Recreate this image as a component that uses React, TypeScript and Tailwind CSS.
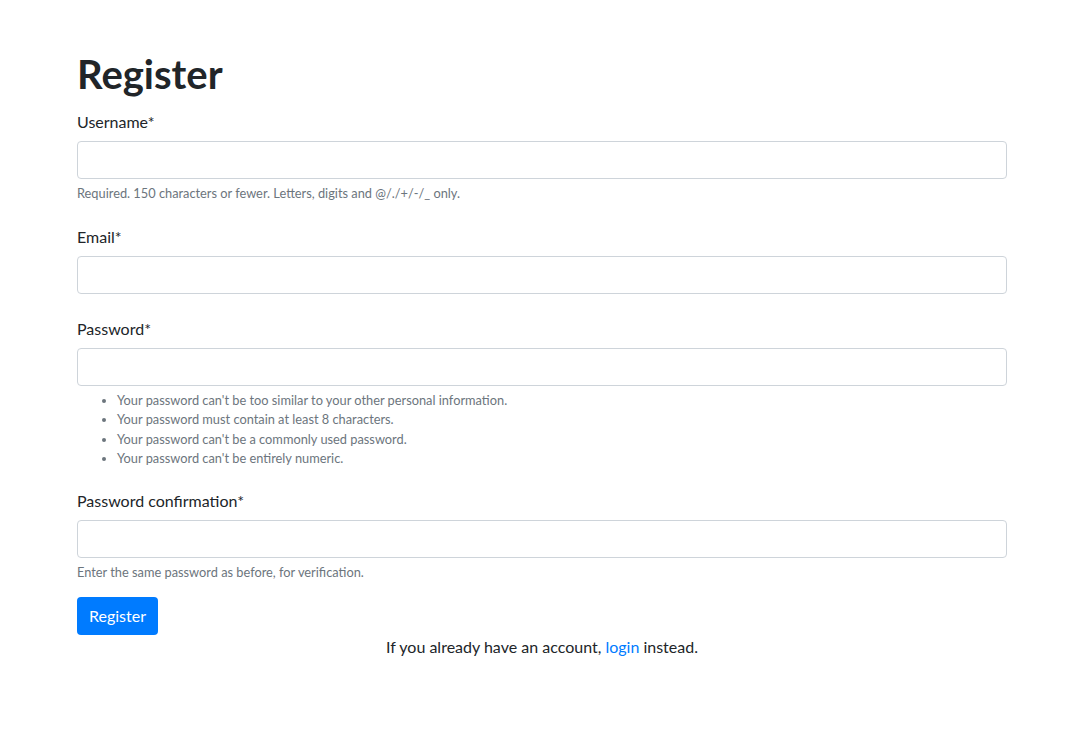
export default function App() {
  const font = { fontFamily: 'Lato, "Noto Sans", sans-serif' };
  return (
    <div className="min-h-[742px] bg-white pt-[50px] text-[#212529]" style={font}>
      <div className="ml-[77px] w-[930px]">
        <h1 className="h-[48px] text-[40px] font-bold leading-[48px]">Register</h1>
        <form>
          <label className="mt-[12px] mb-[7px] block text-base leading-6">Username*</label>
          <input type="text" className="block h-[38px] w-full rounded-[4px] border border-[#ced4da] px-3" />
          <small className="mt-[5px] block text-[12.8px] leading-[19.2px] text-[#6c757d]">
            Required. 150 characters or fewer. Letters, digits and @/./+/-/_ only.
          </small>

          <label className="mt-[22px] mb-[7px] block text-base leading-6">Email*</label>
          <input type="email" className="block h-[38px] w-full rounded-[4px] border border-[#ced4da] px-3" />

          <label className="mt-[23px] mb-[7px] block text-base leading-6">Password*</label>
          <input type="password" className="block h-[38px] w-full rounded-[4px] border border-[#ced4da] px-3" />
          <ul className="mt-[5px] list-disc pl-[40px] text-[12.8px] leading-[19.2px] text-[#6c757d]">
            <li>Your password can't be too similar to your other personal information.</li>
            <li>Your password must contain at least 8 characters.</li>
            <li>Your password can't be a commonly used password.</li>
            <li>Your password can't be entirely numeric.</li>
          </ul>

          <label className="mt-[21px] mb-[7px] block text-base leading-6">Password confirmation*</label>
          <input type="password" className="block h-[38px] w-full rounded-[4px] border border-[#ced4da] px-3" />
          <small className="mt-[5px] block text-[12.8px] leading-[19.2px] text-[#6c757d]">
            Enter the same password as before, for verification.
          </small>

          <button
            type="button"
            className="mt-[15px] h-[38px] rounded-[4px] bg-[#007bff] px-3 text-base leading-6 text-white"
          >
            Register
          </button>
        </form>
        <p className="text-center text-base leading-6">
          If you already have an account, <a href="#" className="text-[#007bff]">login</a> instead.
        </p>
      </div>
    </div>
  );
}
